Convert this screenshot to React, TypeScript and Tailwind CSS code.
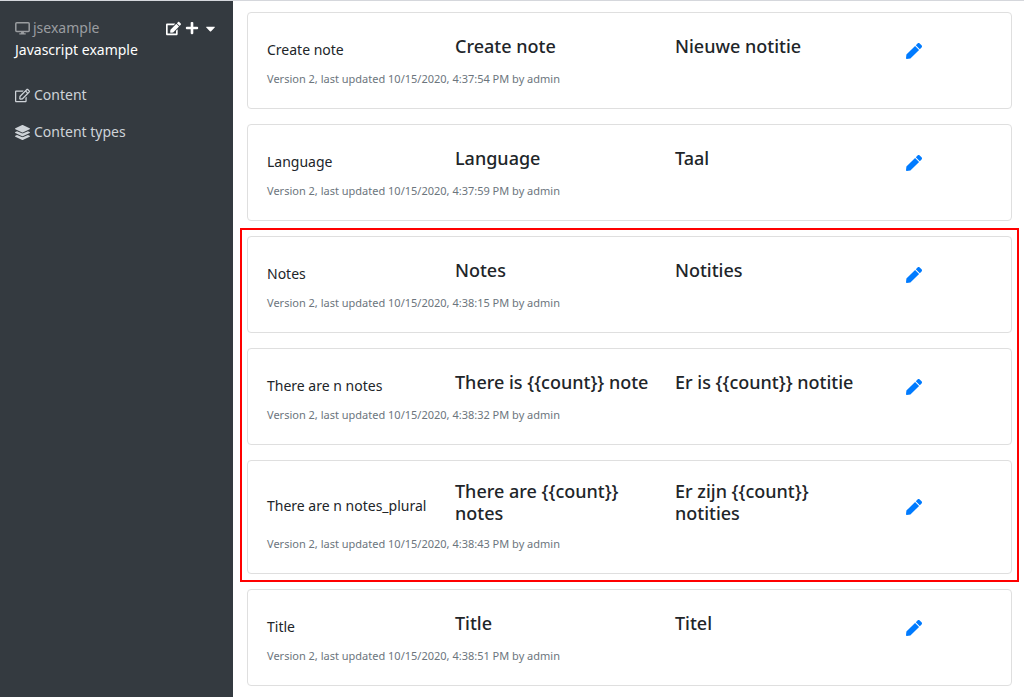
import React from "react";
import { FaRegEdit, FaEdit, FaPlus, FaCaretDown, FaLayerGroup, FaPen } from "react-icons/fa";

type Entry = { name: string; en: string; nl: string; time: string };

const before: Entry[] = [
  { name: "Create note", en: "Create note", nl: "Nieuwe notitie", time: "4:37:54" },
  { name: "Language", en: "Language", nl: "Taal", time: "4:37:59" },
];
const highlighted: Entry[] = [
  { name: "Notes", en: "Notes", nl: "Notities", time: "4:38:15" },
  { name: "There are n notes", en: "There is {{count}} note", nl: "Er is {{count}} notitie", time: "4:38:32" },
  { name: "There are n notes_plural", en: "There are {{count}} notes", nl: "Er zijn {{count}} notities", time: "4:38:43" },
];
const after: Entry[] = [{ name: "Title", en: "Title", nl: "Titel", time: "4:38:51" }];

function MonitorIcon() {
  return (
    <svg width="15" height="14" viewBox="0 0 15 14" fill="none" aria-hidden="true">
      <rect x="0.8" y="1.8" width="13.4" height="8.6" rx="1" stroke="currentColor" strokeWidth="1.5" />
      <path d="M6.3 10.4h2.4l.4 1.8h1.6v1.3H4.3v-1.3h1.6z" fill="currentColor" />
    </svg>
  );
}

function Card({ name, en, nl, time }: Entry) {
  return (
    <article className="rounded border border-[#dfdfdf] bg-white px-[19px] pt-[19px] pb-5">
      <div className="grid min-h-[35px] grid-cols-[188fr_220fr_231fr_86fr] items-center">
        <div className="text-[14px] leading-[22px] whitespace-nowrap">{name}</div>
        <h2 className="pr-5 pb-2 text-[18px] leading-[22px] font-medium">{en}</h2>
        <h2 className="pr-10 pb-2 text-[18px] leading-[22px] font-medium">{nl}</h2>
        <button type="button" aria-label={`Edit ${name}`} className="justify-self-start pt-[2px] text-[#007bff]">
          <FaPen size={16} />
        </button>
      </div>
      <p className="pt-[3px] text-[11px] leading-[18px] text-[#6c757d]">
        Version 2, last updated 10/15/2020, {time} PM by admin
      </p>
    </article>
  );
}

export default function App() {
  return (
    <div className="flex min-h-screen border-t border-[#d5d7dc] bg-white font-['Noto_Sans','Open_Sans',sans-serif] text-[#212529]">
      <aside className="w-[233px] shrink-0 bg-[#343a40] px-[15px] pt-[16px]">
        <div className="flex items-center justify-between">
          <div className="flex items-center gap-[3px] text-[14px] leading-[22px] text-[#9a9da0]">
            <MonitorIcon />
            jsexample
          </div>
          <div className="flex items-center gap-1 text-white">
            <button type="button" aria-label="Edit app"><FaEdit size={15} /></button>
            <button type="button" aria-label="Add"><FaPlus size={14} /></button>
            <button type="button" aria-label="More"><FaCaretDown size={15} /></button>
          </div>
        </div>
        <div className="text-[14px] leading-[22px] text-white">Javascript example</div>
        <nav className="flex flex-col gap-[15px] pt-[23px] text-[14px] leading-[22px] text-[#ced3d8]">
          <a href="#content" className="flex items-center gap-1"><FaRegEdit size={15} />Content</a>
          <a href="#types" className="flex items-center gap-1"><FaLayerGroup size={15} />Content types</a>
        </nav>
      </aside>
      <main className="min-w-0 flex-1 pt-[11px] pr-[5px] pl-[7px]">
        <div className="flex flex-col gap-[15px] px-[7px]">
          {before.map((e) => <Card key={e.name} {...e} />)}
        </div>
        <section className="mt-[7px] mb-[7px] flex flex-col gap-[15px] border-2 border-[#ff0000] px-[5px] py-[6px]">
          {highlighted.map((e) => <Card key={e.name} {...e} />)}
        </section>
        <div className="px-[7px]">
          {after.map((e) => <Card key={e.name} {...e} />)}
        </div>
      </main>
    </div>
  );
}
